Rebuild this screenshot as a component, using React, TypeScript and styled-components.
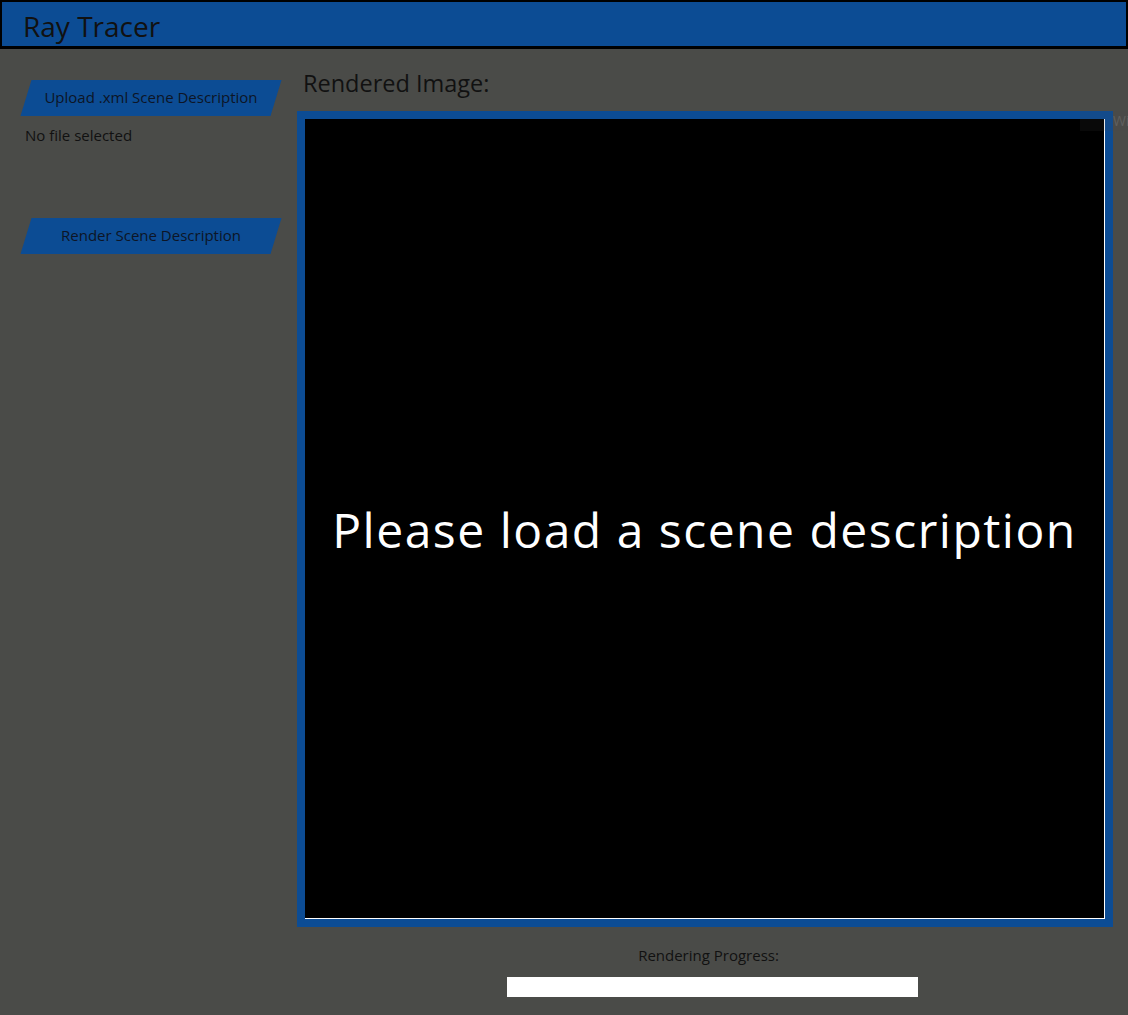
import React from "react";
import styled, { createGlobalStyle } from "styled-components";

const BLUE = "#0c4c94";
const BG = "#4a4b48";

const GlobalStyle = createGlobalStyle`
  html, body {
    margin: 0;
    padding: 0;
    background: ${BG};
  }
  body {
    font-family: "Open Sans", "Noto Sans", sans-serif;
    color: #111;
  }
  * { box-sizing: border-box; }
`;

const Page = styled.div`
  position: relative;
  width: 1128px;
  min-height: 1015px;
  background: ${BG};
  overflow: hidden;
`;

const Header = styled.header`
  height: 49px;
  background: ${BLUE};
  border-style: solid;
  border-color: #000;
  border-width: 2px 2px 3px 2px;
  display: flex;
  align-items: center;
  padding-left: 21px;
`;

const Title = styled.h1`
  margin: 0;
  font-size: 28px;
  font-weight: 400;
  color: #111;
  line-height: 1;
  padding-top: 4px;
`;

const Main = styled.main`
  display: flex;
  align-items: flex-start;
`;

const Sidebar = styled.aside`
  width: 297px;
  flex: none;
  padding: 31px 0 0 26px;
  display: flex;
  flex-direction: column;
  align-items: flex-start;
`;

const SkewButton = styled.button<{ $gap?: number }>`
  margin-top: ${(p) => p.$gap ?? 0}px;
  width: 250px;
  height: 36px;
  border: none;
  padding: 0 0 2px 0;
  background: transparent;
  position: relative;
  cursor: pointer;
  font-family: "Open Sans", "Noto Sans", sans-serif;
  font-size: 15px;
  color: #0d1526;
  &::before {
    content: "";
    position: absolute;
    inset: 0;
    background: ${BLUE};
    transform: skewX(-17deg);
  }
  span {
    position: relative;
  }
`;

const FileStatus = styled.div`
  margin-top: 9px;
  font-size: 15px;
  line-height: 20px;
  color: #111;
  margin-left: -1px;
`;

const Content = styled.section`
  flex: 1;
  display: flex;
  flex-direction: column;
  align-items: flex-start;
  padding-top: 19px;
`;

const Heading = styled.h2`
  margin: 0 0 0 6px;
  font-size: 23.5px;
  font-weight: 400;
  line-height: 30px;
  color: #111;
`;

const Frame = styled.div`
  margin-top: 13px;
  border: 8px solid ${BLUE};
  background: ${BLUE};
`;

const Canvas = styled.div`
  width: 800px;
  height: 800px;
  background: #000;
  border-right: 1px solid #fff;
  border-bottom: 1px solid #fff;
  display: flex;
  align-items: center;
  justify-content: center;
  padding-top: 22px;
`;

const Placeholder = styled.span`
  font-family: "Open Sans", "Noto Sans", sans-serif;
  font-size: 48px;
  font-weight: 400;
  letter-spacing: 1.5px;
  color: #fff;
  white-space: nowrap;
`;

const ProgressLabel = styled.div`
  align-self: stretch;
  text-align: center;
  margin-top: 19px;
  font-size: 15px;
  line-height: 18px;
  color: #111;
  padding-right: 8px;
`;

const ProgressBar = styled.div`
  align-self: center;
  margin-top: 13px;
  width: 411px;
  height: 20px;
  background: #fff;
`;

const Overlay = styled.div`
  position: absolute;
  top: 111px;
  left: 1080px;
  width: 48px;
  height: 20px;
  background: rgba(70, 70, 70, 0.12);
  overflow: hidden;
  padding-left: 33px;
  font-size: 14px;
  line-height: 20px;
  color: rgba(110, 110, 110, 0.6);
  white-space: nowrap;
`;

export default function App() {
  return (
    <Page>
      <GlobalStyle />
      <Header>
        <Title>Ray Tracer</Title>
      </Header>
      <Main>
        <Sidebar>
          <SkewButton>
            <span>Upload .xml Scene Description</span>
          </SkewButton>
          <FileStatus>No file selected</FileStatus>
          <SkewButton $gap={73}>
            <span>Render Scene Description</span>
          </SkewButton>
        </Sidebar>
        <Content>
          <Heading>Rendered Image:</Heading>
          <Frame>
            <Canvas>
              <Placeholder>Please load a scene description</Placeholder>
            </Canvas>
          </Frame>
          <ProgressLabel>Rendering Progress:</ProgressLabel>
          <ProgressBar />
        </Content>
      </Main>
      <Overlay>Wi</Overlay>
    </Page>
  );
}
